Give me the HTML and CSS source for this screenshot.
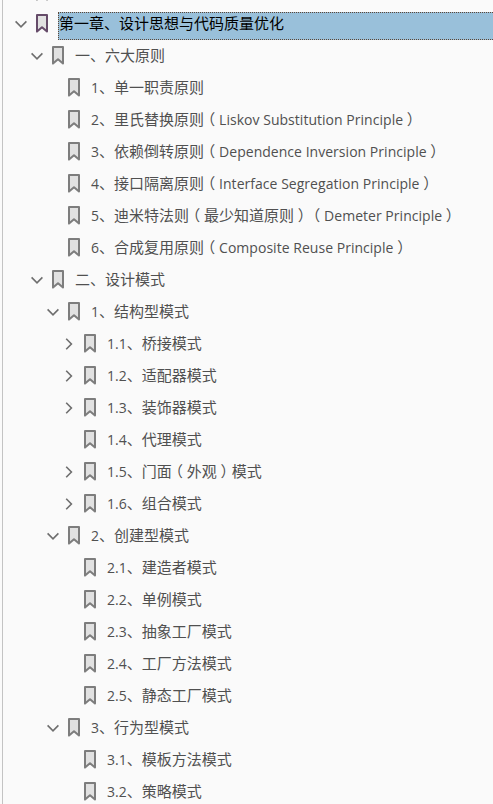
FILE: index.html
```
<!DOCTYPE html>
<html lang="zh-CN">
<head>
    <meta charset="UTF-8">
    <meta name="viewport" content="width=device-width, initial-scale=1.0">
    <title>书签目录</title>
    <link rel="stylesheet" href="styles.css">
</head>
<body>
    <!-- 图标定义 -->
    <svg class="icon-defs" width="0" height="0">
        <symbol id="bookmark" viewBox="0 0 12 19">
            <path class="mark" d="M1 1H11V17.6L6 13.2L1 17.6Z"/>
        </symbol>
        <symbol id="down" viewBox="0 0 12 12">
            <path class="chevron" d="M0.6 3.4L6 8.8L11.4 3.4"/>
        </symbol>
        <symbol id="right" viewBox="0 0 12 12">
            <path class="chevron" d="M3.2 0.8L8.4 6L3.2 11.2"/>
        </symbol>
    </svg>

    <!-- 目录树 -->
    <div class="tree" id="tree"></div>

    <script>
        // 每项: 层级, 箭头, 编号, 标题, 英文名
        const items = [
            [0, '', '', ''],
            [0, 'down', '', '第一章、设计思想与代码质量优化'],
            [1, 'down', '', '一、六大原则'],
            [2, '', '1', '、单一职责原则'],
            [2, '', '2', '、里氏替换原则', 'Liskov Substitution Principle'],
            [2, '', '3', '、依赖倒转原则', 'Dependence Inversion Principle'],
            [2, '', '4', '、接口隔离原则', 'Interface Segregation Principle'],
            [2, '', '5', '、迪米特法则（最少知道原则）', 'Demeter Principle'],
            [2, '', '6', '、合成复用原则', 'Composite Reuse Principle'],
            [1, 'down', '', '二、设计模式'],
            [2, 'down', '1', '、结构型模式'],
            [3, 'right', '1.1', '、桥接模式'],
            [3, 'right', '1.2', '、适配器模式'],
            [3, 'right', '1.3', '、装饰器模式'],
            [3, '', '1.4', '、代理模式'],
            [3, 'right', '1.5', '、门面（外观）模式'],
            [3, 'right', '1.6', '、组合模式'],
            [2, 'down', '2', '、创建型模式'],
            [3, '', '2.1', '、建造者模式'],
            [3, '', '2.2', '、单例模式'],
            [3, '', '2.3', '、抽象工厂模式'],
            [3, '', '2.4', '、工厂方法模式'],
            [3, '', '2.5', '、静态工厂模式'],
            [2, 'down', '3', '、行为型模式'],
            [3, '', '3.1', '、模板方法模式'],
            [3, '', '3.2', '、策略模式']
        ];

        // 括号单独包裹，在一个字宽内居中
        function brackets(text) {
            return text.replace(/[（）]/g, '<span class="bracket">$&</span>');
        }

        document.getElementById('tree').innerHTML = items.map(([level, arrow, num, title, en], i) => {
            const icon = arrow ? `<svg><use href="#${arrow}"/></svg>` : '';
            const number = num ? `<span class="latin">${num}</span>` : '';
            const english = en ? brackets('（') + `<span class="latin">${en}</span>` + brackets('）') : '';
            return `<div class="row level-${level}${i === 1 ? ' selected' : ''}">
                <span class="arrow">${icon}</span>
                <svg class="bookmark"><use href="#bookmark"/></svg>
                <span class="label">${number}${brackets(title)}${english}</span>
            </div>`;
        }).join('');
    </script>
</body>
</html>
```
FILE: styles.css
```
/* 全局样式 */
body {
    margin: 0;
    height: 804px;
    overflow: hidden;
    background-color: #fafafa;
    color: #505050;
    font-family: "Noto Sans CJK SC", sans-serif;
    font-size: 15px;
    font-weight: 400;
}

.icon-defs {
    display: block;
}

/* 目录树，顶部露出上一行的末端 */
.tree {
    box-sizing: border-box;
    height: 804px;
    margin-left: 2px;
    border-left: 1px solid #c3c3c3;
    overflow: hidden;
}

.row {
    display: flex;
    align-items: center;
    height: 32px;
    white-space: nowrap;
}

.row:first-child {
    margin-top: -24px;
}

.level-0 { padding-left: 12px; }
.level-1 { padding-left: 28px; }
.level-2 { padding-left: 44px; }
.level-3 { padding-left: 60px; }

/* 图标样式 */
.arrow {
    width: 12px;
    height: 12px;
    margin-right: 9px;
}

.arrow svg {
    display: block;
    width: 12px;
    height: 12px;
}

.bookmark {
    width: 12px;
    height: 19px;
    margin-right: 10px;
    margin-bottom: 1px;
    flex-shrink: 0;
    --mark-color: #7d7d7d;
}

.mark {
    fill: #e1e1e1;
    stroke: var(--mark-color);
    stroke-width: 2;
    stroke-linejoin: round;
}

.chevron {
    fill: none;
    stroke: #6e6e6e;
    stroke-width: 1.6;
}

/* 文字样式 */
.label {
    box-sizing: border-box;
    height: 28px;
    margin-top: 4px;
    padding-left: 1px;
    line-height: 20px;
    border-top: 1px solid transparent;
    border-bottom: 1px solid transparent;
}

.latin {
    font-family: "Open Sans", "Noto Sans", sans-serif;
    font-size: 14px;
    letter-spacing: 0.03px;
}

.bracket {
    display: inline-block;
    width: 15px;
    text-align: center;
    font-feature-settings: "halt";
}

/* 选中行 */
.selected .label {
    flex: 1;
    padding-left: 0;
    color: #000;
    background-color: #99c0da;
    border: 1px dotted #5c4636;
    border-right: none;
}

.selected .bookmark {
    --mark-color: #654b69;
}
```
